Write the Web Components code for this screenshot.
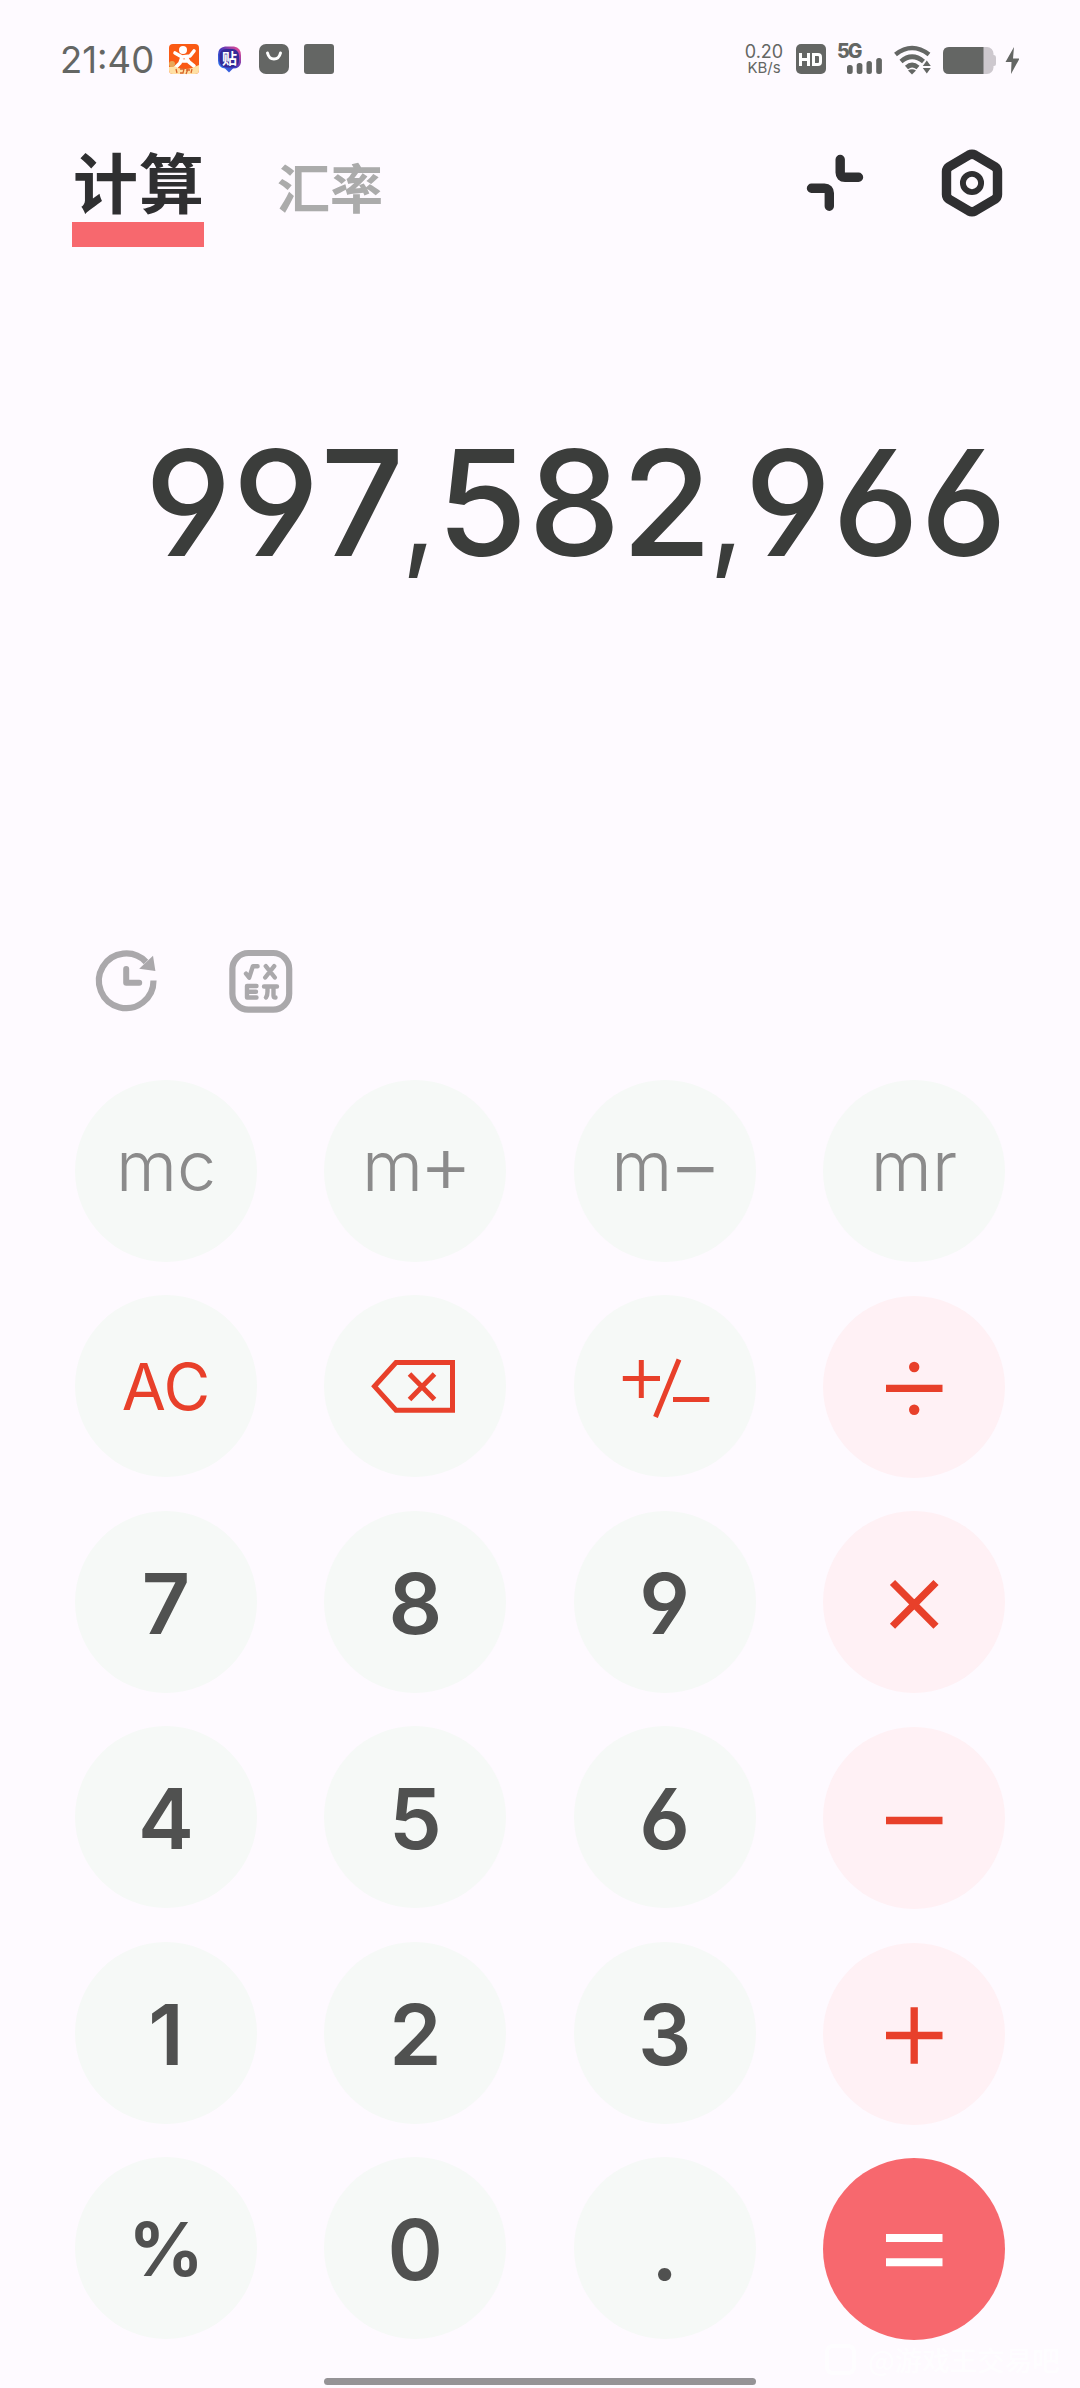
<!DOCTYPE html>
<html lang="zh-CN">
<head>
<meta charset="utf-8">
<title>计算</title>
<style>
html,body{margin:0;padding:0}
body{width:1080px;height:2388px;overflow:hidden;background:#fefaff;font-family:Inter,"Noto Sans CJK SC",sans-serif}
</style>
</head>
<body>
<calc-app></calc-app>
<script>
const define=(name,html)=>customElements.define(name,class extends HTMLElement{
  constructor(){super();this.attachShadow({mode:'open'}).innerHTML=html;}
});

define('status-bar',`<style>
:host{display:flex;align-items:flex-start;height:80px;padding:0 61px 0 60px;box-sizing:border-box;color:#646664;justify-content:space-between}
.g{display:flex;align-items:flex-start}
svg{display:block;margin-top:40px}
.time{font:400 36.5px/40px Inter,sans-serif;width:109px;margin-top:40px;letter-spacing:0;white-space:nowrap}
.net{width:46px;margin-top:43px;margin-right:9px;text-align:center;white-space:nowrap}
.net div{font:400 18px/17px Inter,sans-serif}
.net div+div{font-size:15px;line-height:16px}
.five{width:52px;margin-top:43px}
.five b{display:block;font:800 19.500px/16px Inter,sans-serif;height:16px;letter-spacing:-2px;margin-left:-1px}
.five svg{margin:-1px 0 0 9px}
.sq{width:30px;height:30px;border-radius:3px;background:#646664;margin:44px 0 0 15px}
</style>
<div class="g">
<div class="time">21:40</div>
<svg width="30" height="40" viewBox="169 40 30 40"><rect x="169" y="44" width="30" height="30" rx="4" fill="#fa5a14"/><circle cx="183" cy="50" r="4" fill="#fff"/><path d="M175 53l7 4 8-1 4-5M182 57l-2 6-5 5M186 57l3 5 5 4M182 61l6 0" fill="none" stroke="#fff" stroke-width="3.6" stroke-linecap="round" stroke-linejoin="round"/><path d="M169 67q6-2 9 1 8 2 14 0l7-3v5q0 4-4 4h-22q-4 0-4-4z" fill="#ffe0a4"/><path d="M176 69l1 4M180 69h4l-1 4h-3M186 70h4M188 69l-2 5M192 69l-1 4" stroke="#d9662c" stroke-width="1.3" fill="none"/><circle cx="172" cy="64" r="3" fill="#e8a758"/></svg>
<svg width="60" height="40" viewBox="199 40 60 40"><defs><linearGradient id="t" x1="0" y1="1" x2="1" y2="0"><stop offset="0" stop-color="#258cff"/><stop offset=".5" stop-color="#4536bd"/><stop offset="1" stop-color="#ff4d8c"/></linearGradient></defs><path d="M225 46.500h9q7 1 7 9v7q-1 6-8 6l-4 4-4-4q-7-1-7-8v-6q0-7 7-8z" fill="url(#t)"/><rect x="219.500" y="49" width="19.500" height="18.500" rx="6.500" fill="#342a98"/><text x="222" y="63.500" font-family="Noto Sans CJK SC" font-weight="700" font-size="15" fill="#fff">贴</text></svg>
<svg width="30" height="40" viewBox="259 40 30 40"><rect x="259" y="44" width="30" height="30" rx="7" fill="#646664"/><path d="M267.500 53q1.500 6 6.500 6t6.500-6" fill="none" stroke="#fff" stroke-width="3" stroke-linecap="round"/></svg>
<div class="sq"></div>
</div>
<div class="g">
<div class="net"><div>0.20</div><div>KB/s</div></div>
<svg width="42" height="40" viewBox="795 40 42 40"><rect x="795" y="44" width="30" height="30" rx="5" fill="#646664"/><path d="M799.500 53v13M807.500 53v13M799.500 59.500h8M812.500 54.500h4.500q2.500 0 2.500 2.500v5q0 2.500-2.500 2.500h-4.500z" fill="none" stroke="#fff" stroke-width="3"/></svg>
<div class="five"><b>5G</b><svg width="36" height="17" viewBox="846 58 36 17" fill="#646664"><rect x="846" y="65" width="5.700" height="9" rx="2.500"/><rect x="855.700" y="63" width="5.700" height="11" rx="2.500"/><rect x="865.500" y="61" width="5.400" height="13" rx="2.500"/><rect x="875.200" y="58" width="5.700" height="16" rx="2.500"/></svg></div>
<svg width="53" height="40" viewBox="890 40 53 40" fill="none" stroke="#646664" stroke-width="4.600"><path d="M895.500 54.500Q912 41.500 929 54.500M901 61.500Q912 52 923.500 61.500M906.500 67.500Q912 62.500 918 67.500"/><path d="M908 70.500q4-2.500 8 0l-4 4z" fill="#646664" stroke="none"/><path d="M926.800 60.500l4 5.500h-8zM926.800 73.500l4-5.500h-8z" fill="#646664" stroke="none"/></svg>
<svg width="76" height="40" viewBox="943 40 76 40"><rect x="943" y="47" width="50.500" height="27" rx="6.500" fill="#cdc8ce"/><path d="M949 47h34.500v27H949q-6 0-6-6V53q0-6 6-6z" fill="#646664"/><path d="M993 55h1q2 0 2 2.500v6.500q0 2-2 2h-1z" fill="#cdc8ce"/><path d="M1014 47l-8.500 15h6l-.5 12 8.500-15.500h-6.500z" fill="#646664"/></svg>
</div>`);

define('mode-tabs',`<style>
:host{display:flex;height:180px;padding:0 72px;box-sizing:border-box;align-items:flex-start}
.on{width:132px;height:109.500px;margin-top:57px;border-bottom:25.500px solid #f7686e;box-sizing:border-box;padding-left:1px;font:700 65px/86px "Noto Sans CJK SC",sans-serif;color:#2f2f31;white-space:nowrap;letter-spacing:1px}
.off{margin:73.500px 0 0 73px;font:700 53px/64px "Noto Sans CJK SC",sans-serif;color:#ababab;width:110px;white-space:nowrap}
.a{display:flex;margin-left:auto}
</style>
<div class="on">计算</div><div class="off">汇率</div>
<div class="a"><svg width="202" height="180" viewBox="806 80 202 180" fill="none" stroke="#2f2f31" stroke-width="9.400" stroke-linecap="round" stroke-linejoin="round"><path d="M840.200 159.500v13q0 4.800 4.800 4.800h13.500M811.500 188.300h13q4.800 0 4.800 4.800v13.200"/><path d="M969 155q3-1.600 6 0l19.500 11.500q3 1.900 3 5v23q0 3.100-3 5L975 211q-3 1.600-6 0l-19.500-11.500q-3-1.900-3-5v-23q0-3.100 3-5z"/><circle cx="972" cy="183" r="9.100" stroke-width="5.900"/></svg></div>`);

define('calc-display',`<style>
:host{display:flex;justify-content:flex-end;height:680px;padding:153px 72px 0 0;box-sizing:border-box}
div{font:500 146.700px/180px Inter,sans-serif;font-feature-settings:"cv03","cv04";font-kerning:none;letter-spacing:.900px;color:#3b3d3b;white-space:nowrap}
::slotted(span){font-size:124px;font-weight:400;line-height:1px;margin:0 -1px 0 -4px}
</style><div><slot></slot></div>`);

define('calc-tools',`<style>:host{display:flex;height:140px;padding-left:90px;box-sizing:border-box}svg{display:block}</style>
<svg width="210" height="100" viewBox="90 940 210 100" fill="none" stroke="#aaa8ab" stroke-width="6.200"><path d="M153.500 980.500a27.300 27.300 0 1 1-7.500-18.500"/><path d="M153 955.700l2.400 15.200-16.200-2.200z" fill="#aaa8ab" stroke="none"/><path d="M126.200 969v13.700h13" stroke-width="6" stroke-linecap="round" stroke-linejoin="round"/><rect x="232.400" y="953" width="56.800" height="56.700" rx="16"/><g stroke-width="4.400" stroke-linecap="round" stroke-linejoin="round"><path d="M246 973.700l3.200 4 3.700-11.500h4.700M265.800 966.200l9 11.300M274.200 966.200l-9 11.300M256.500 986h-9.500v11.500h9.500M247 991.800h9M264 986.500h13M267.500 986.500v5q0 4-1.500 6M273.500 986.500v9q0 2 2 2"/></g></svg>`);

customElements.define('calc-key',class extends HTMLElement{
  connectedCallback(){
    this.attachShadow({mode:'open'}).innerHTML=`<style>
:host{display:flex;width:182px;height:182px;border-radius:50%;background:#f6f9f7;align-items:center;justify-content:center;color:#505150;font:600 84px/100px Inter,sans-serif;font-feature-settings:"cv03","cv04"}
:host([kind=mem]){font:350 70px/90px Inter,sans-serif;color:#8b8b8b;--dy:-10px}
:host([kind=fn]){font:400 64px/80px Inter,sans-serif;color:#e8402a;--dy:2px}
:host([kind=op]){background:#fff1f5;color:#e8402a}
:host([kind=eq]){background:#f7686e;color:#fff}
:host([kind=pct]){font-size:74px;font-weight:650;--dy:3px}
div{margin-top:var(--dy,4px);white-space:nowrap}
::slotted(svg){display:block;margin-top:-2px}
:host([kind=op]) div,:host([kind=eq]) div{margin-top:0}
:host([kind=op]) ::slotted(svg),:host([kind=eq]) ::slotted(svg){margin-top:0}
::slotted(span){display:inline-block;font-size:82px;line-height:60px;vertical-align:-2px;margin:0 -4px}
</style><div><slot></slot></div>`;
  }
});

define('key-pad',`<style>
:host{display:flex;padding:0 75px;justify-content:space-between;height:1298px}
.c{display:flex;flex-direction:column;gap:33.400px}
.r{gap:33.700px}
</style>
<div class="c"><calc-key kind="mem">mc</calc-key><calc-key kind="fn">AC</calc-key><calc-key>7</calc-key><calc-key>4</calc-key><calc-key>1</calc-key><calc-key kind="pct">%</calc-key></div>
<div class="c"><calc-key kind="mem">m<span>+</span></calc-key><calc-key kind="fn"><svg width="182" height="182" viewBox="325 1295 182 182" fill="none" stroke="#e8402a" stroke-width="5"><path d="M397 1362.500h56.500v47.700H397l-21.500-23.900zM410.500 1374l25 25.500M435.500 1374l-25 25.500"/></svg></calc-key><calc-key>8</calc-key><calc-key>5</calc-key><calc-key>2</calc-key><calc-key>0</calc-key></div>
<div class="c"><calc-key kind="mem">m<span>−</span></calc-key><calc-key kind="fn"><svg width="182" height="182" viewBox="574 1295 182 182" fill="none" stroke="#e8402a" stroke-width="5"><path d="M622.800 1378.500h37.200M641.300 1360v38M673 1399.500h36.300M679 1359.500l-23.500 57.500"/></svg></calc-key><calc-key>9</calc-key><calc-key>6</calc-key><calc-key>3</calc-key><calc-key>.</calc-key></div>
<div class="c r"><calc-key kind="mem">mr</calc-key>
<calc-key kind="op"><svg width="182" height="182" viewBox="823 1296 182 182" fill="#e8402a"><path d="M886 1384.700h56.500v7.300H886z"/><circle cx="914.200" cy="1367" r="5.200"/><circle cx="914.200" cy="1409.700" r="5.200"/></svg></calc-key>
<calc-key kind="op"><svg width="182" height="182" viewBox="823 1511 182 182" stroke="#e8402a" stroke-width="7.300"><path d="M892.500 1582.500l43.500 43.800M936 1582.500l-43.500 43.800"/></svg></calc-key>
<calc-key kind="op"><svg width="182" height="182" viewBox="823 1727 182 182" stroke="#e8402a" stroke-width="7.300"><path d="M886 1820.500h56.500"/></svg></calc-key>
<calc-key kind="op"><svg width="182" height="182" viewBox="823 1943 182 182" stroke="#e8402a" stroke-width="7.300"><path d="M886 2035.500h56.500M914.200 2007.200v56.500"/></svg></calc-key>
<calc-key kind="eq"><svg width="182" height="182" viewBox="823 2158 182 182" stroke="#fff" stroke-width="8"><path d="M886 2238h56.500M886 2262.200h56.500"/></svg></calc-key></div>`);

define('page-foot',`<style>
:host{display:flex;height:10px;justify-content:center;position:relative}
.bar{width:432px;height:7px;border-radius:3.500px;background:#959396}
.mark{position:absolute;left:825px;top:-38px;display:flex;align-items:center;gap:12px;color:#fff;font:500 27.500px/38px "Noto Sans CJK SC",sans-serif;white-space:nowrap;opacity:.75}
i{width:23px;height:23px;border:4px solid #fff;border-radius:8px}
</style><div class="mark"><i></i><span>@游戏王交易吧</span></div><div class="bar"></div>`);

define('calc-app',`<style>:host{display:flex;flex-direction:column;width:1080px;height:2388px}</style>
<status-bar></status-bar><mode-tabs></mode-tabs><calc-display>997<span>,</span>582<span>,</span>966</calc-display><calc-tools></calc-tools><key-pad></key-pad><page-foot></page-foot>`);
</script>
</body>
</html>
